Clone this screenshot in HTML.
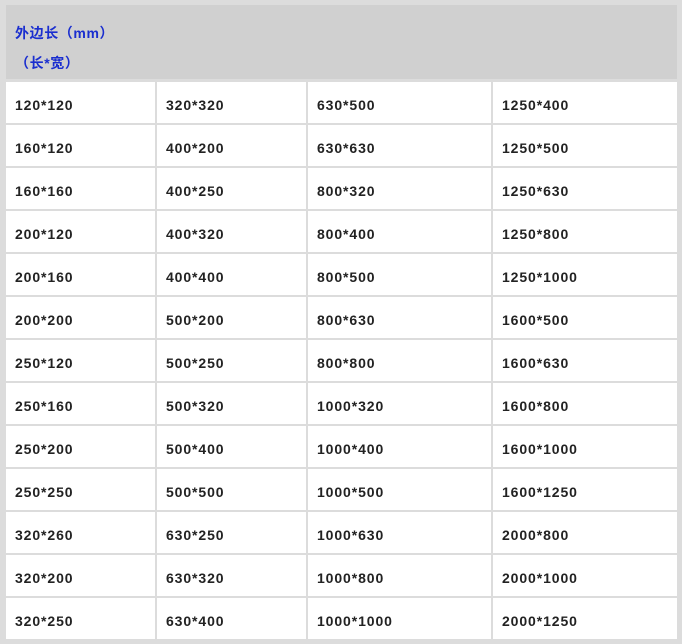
<!DOCTYPE html>
<html><head><meta charset="utf-8"><style>
body{margin:0;width:682px;height:642px;background:#dcdcdc;position:relative;overflow:hidden;font-family:"Liberation Sans","Noto Sans CJK SC",sans-serif;}
.h{position:absolute;left:6px;top:5px;width:671px;height:74px;background:#d0d0d0;}
.h div{position:absolute;left:9px;color:#1a2ecf;font-weight:bold;font-size:14px;letter-spacing:0.6px;}
.c{position:absolute;height:41px;background:#fff;font-weight:bold;font-size:14px;color:#222;line-height:46px;padding-left:9px;box-sizing:border-box;letter-spacing:0.9px;}
</style></head><body>
<div class="h"><div style="top:18px">外边长（mm）</div><div style="top:48px">（长*宽）</div></div>
<div id="t"></div>
<script>
var d=[["120*120","320*320","630*500","1250*400"],["160*120","400*200","630*630","1250*500"],["160*160","400*250","800*320","1250*630"],["200*120","400*320","800*400","1250*800"],["200*160","400*400","800*500","1250*1000"],["200*200","500*200","800*630","1600*500"],["250*120","500*250","800*800","1600*630"],["250*160","500*320","1000*320","1600*800"],["250*200","500*400","1000*400","1600*1000"],["250*250","500*500","1000*500","1600*1250"],["320*260","630*250","1000*630","2000*800"],["320*200","630*320","1000*800","2000*1000"],["320*250","630*400","1000*1000","2000*1250"]];
var xs=[[6,155],[157,306],[308,491],[493,677]],h="";
d.forEach(function(r,i){r.forEach(function(t,j){h+='<div class="c" style="left:'+xs[j][0]+'px;width:'+(xs[j][1]-xs[j][0])+'px;top:'+(82+43*i)+'px">'+t+'</div>';});});
document.getElementById("t").innerHTML=h;
</script>
</body></html>
